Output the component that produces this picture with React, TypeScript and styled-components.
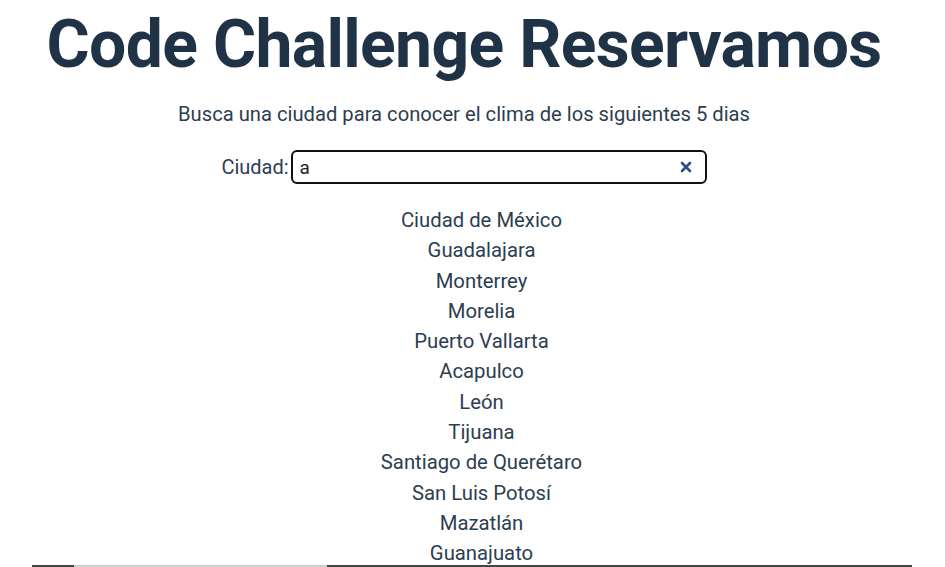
import React, { useState } from "react";
import styled, { createGlobalStyle } from "styled-components";

const GlobalStyle = createGlobalStyle`
  html, body { margin: 0; padding: 0; background: #ffffff; }
  body { font-family: Roboto, "Liberation Sans", Arial, sans-serif; color: #2c3e50; overflow: hidden; }
`;

const Page = styled.div`
  display: flex;
  flex-direction: column;
  align-items: center;
  width: 928px;
  height: 567px;
  overflow: hidden;
`;

const Title = styled.h1`
  margin: 6px 0 0 0;
  font-size: 66px;
  font-weight: 700;
  line-height: 78px;
  color: #1f3246;
  letter-spacing: -0.65px;
`;

const Subtitle = styled.p`
  margin: 18px 0 0 0;
  font-size: 20.2px;
  line-height: 24px;
  color: #2c3e50;
`;

const SearchRow = styled.div`
  display: flex;
  align-items: center;
  gap: 2px;
  margin-top: 24px;
`;

const Label = styled.label`
  font-size: 20px;
  color: #2c3e50;
`;

const InputBox = styled.div`
  display: flex;
  align-items: center;
  width: 416px;
  height: 34px;
  box-sizing: border-box;
  border: 2px solid #111;
  border-radius: 6px;
  padding: 0 13px 0 7px;
`;

const Input = styled.input`
  flex: 1;
  border: none;
  outline: none;
  font-family: Roboto, "Liberation Sans", Arial, sans-serif;
  font-size: 19px;
  color: #222;
  padding: 0;
  background: transparent;
`;

const ClearButton = styled.button`
  border: none;
  background: transparent;
  padding: 0;
  display: flex;
  align-items: center;
  cursor: pointer;
`;

const CityList = styled.ul`
  list-style: none;
  margin: 21px 0 0 0;
  padding: 0 0 0 35px;
  text-align: center;
`;

const CityItem = styled.li`
  font-size: 20.3px;
  line-height: 30.3px;
  color: #2c3e50;
`;

const Divider = styled.div`
  position: absolute;
  left: 32px;
  top: 565px;
  width: 880px;
  height: 2px;
  background: linear-gradient(
    to right,
    #444 0px,
    #444 42px,
    #cfcfcf 42px,
    #cfcfcf 295px,
    #444 295px,
    #444 880px
  );
`;

const cities = [
  "Ciudad de México",
  "Guadalajara",
  "Monterrey",
  "Morelia",
  "Puerto Vallarta",
  "Acapulco",
  "León",
  "Tijuana",
  "Santiago de Querétaro",
  "San Luis Potosí",
  "Mazatlán",
  "Guanajuato",
];

export default function App() {
  const [query, setQuery] = useState("a");
  return (
    <>
      <GlobalStyle />
      <Page>
        <Title>Code Challenge Reservamos</Title>
        <Subtitle>Busca una ciudad para conocer el clima de los siguientes 5 dias</Subtitle>
        <SearchRow>
          <Label htmlFor="city">Ciudad:</Label>
          <InputBox>
            <Input id="city" value={query} onChange={(e) => setQuery(e.target.value)} />
            <ClearButton onClick={() => setQuery("")} aria-label="clear">
              <svg width="12" height="12" viewBox="0 0 12 12">
                <path d="M2 2 L10 10 M10 2 L2 10" stroke="#2b4f86" strokeWidth="2.6" strokeLinecap="round" />
              </svg>
            </ClearButton>
          </InputBox>
        </SearchRow>
        <CityList>
          {cities.map((c) => (
            <CityItem key={c}>{c}</CityItem>
          ))}
        </CityList>
      </Page>
      <Divider />
    </>
  );
}
